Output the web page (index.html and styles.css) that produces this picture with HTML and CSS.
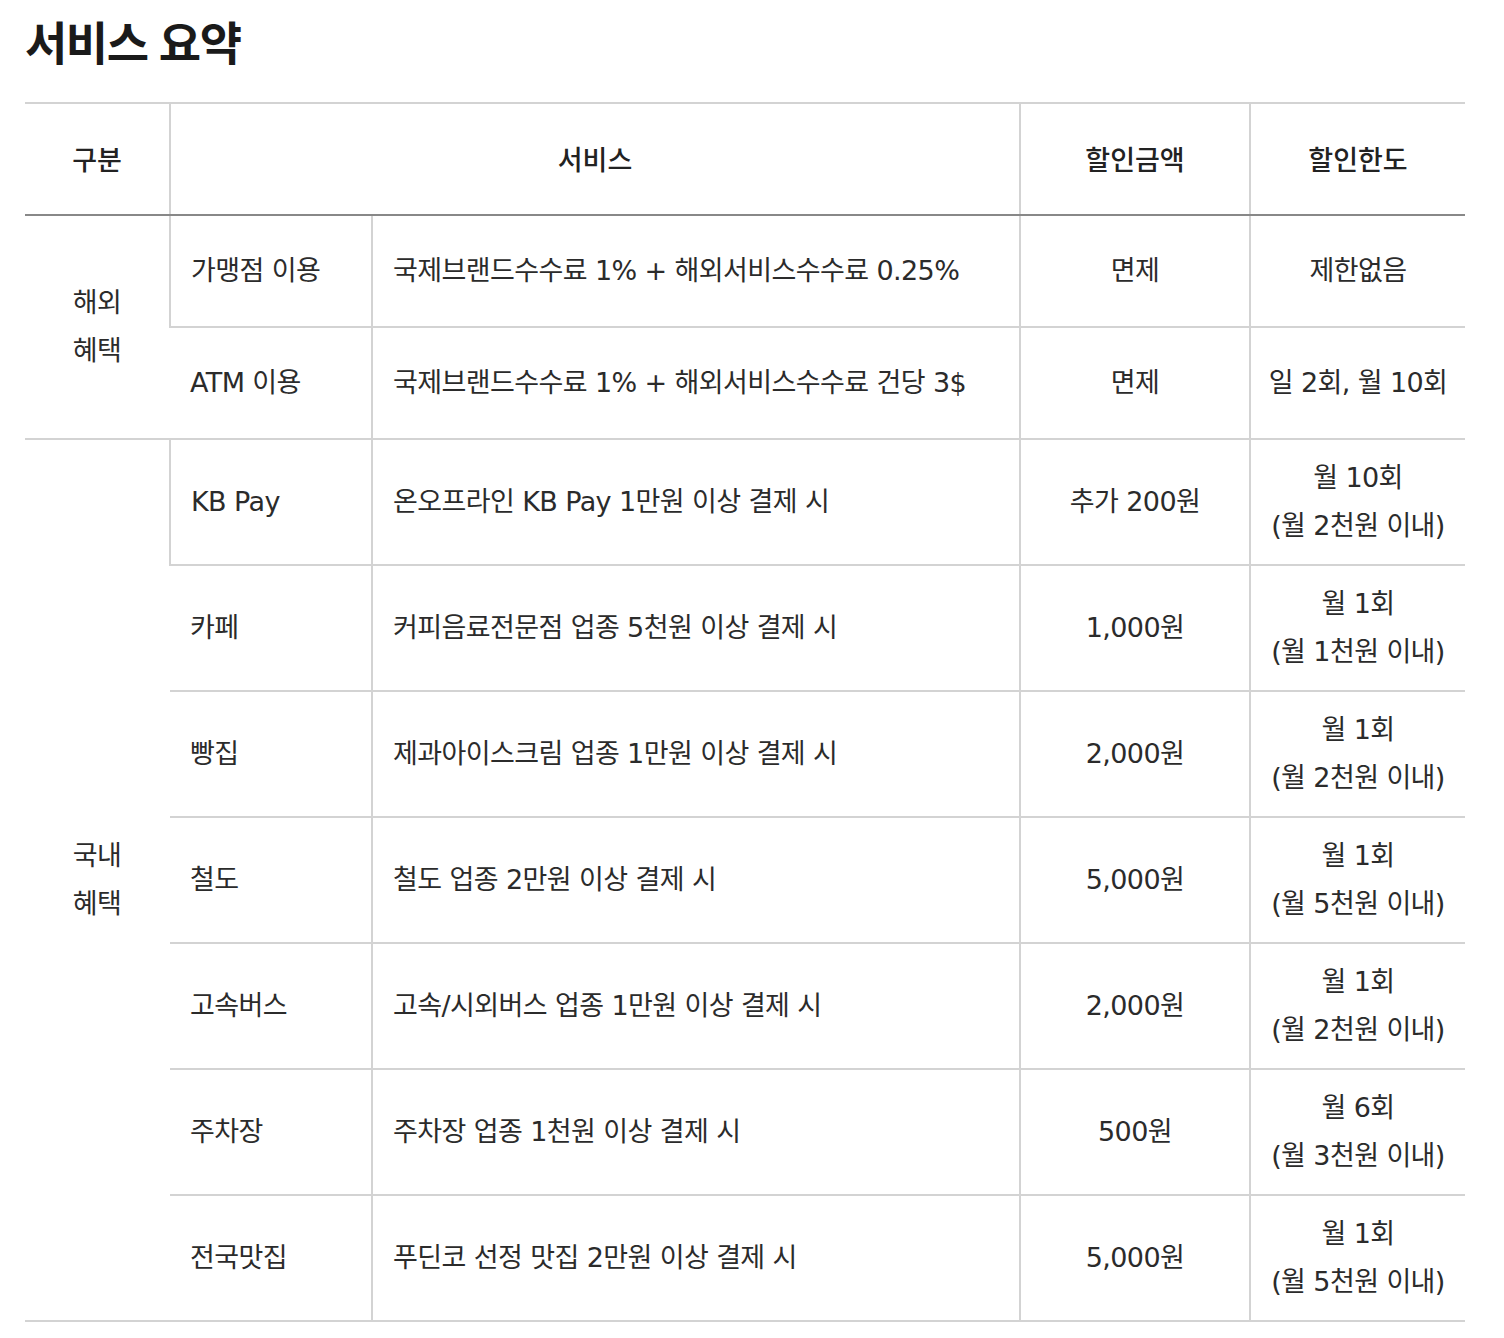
FILE: index.html
```html
<!DOCTYPE html>
<html lang="ko">
<head>
<meta charset="utf-8">
<title>서비스 요약</title>
<link rel="stylesheet" href="styles.css">
</head>
<body>
<div class="page">
  <h2 class="title">서비스 요약</h2>
  <table class="summary">
    <colgroup>
      <col class="c1"><col class="c2"><col class="c3"><col class="c4"><col class="c5">
    </colgroup>
    <thead>
      <tr>
        <th>구분</th>
        <th colspan="2">서비스</th>
        <th>할인금액</th>
        <th>할인한도</th>
      </tr>
    </thead>
    <tbody>
      <tr class="short">
        <td rowspan="2" class="group">해외<br>혜택</td>
        <td class="left">가맹점 이용</td>
        <td class="left">국제브랜드수수료 1% + 해외서비스수수료 0.25%</td>
        <td>면제</td>
        <td>제한없음</td>
      </tr>
      <tr class="short">
        <td class="left">ATM 이용</td>
        <td class="left">국제브랜드수수료 1% + 해외서비스수수료 건당 3$</td>
        <td>면제</td>
        <td>일 2회, 월 10회</td>
      </tr>
      <tr class="tall">
        <td rowspan="7" class="group">국내<br>혜택</td>
        <td class="left">KB Pay</td>
        <td class="left">온오프라인 KB Pay 1만원 이상 결제 시</td>
        <td>추가 200원</td>
        <td>월 10회<br>(월 2천원 이내)</td>
      </tr>
      <tr class="tall">
        <td class="left">카페</td>
        <td class="left">커피음료전문점 업종 5천원 이상 결제 시</td>
        <td>1,000원</td>
        <td>월 1회<br>(월 1천원 이내)</td>
      </tr>
      <tr class="tall">
        <td class="left">빵집</td>
        <td class="left">제과아이스크림 업종 1만원 이상 결제 시</td>
        <td>2,000원</td>
        <td>월 1회<br>(월 2천원 이내)</td>
      </tr>
      <tr class="tall">
        <td class="left">철도</td>
        <td class="left">철도 업종 2만원 이상 결제 시</td>
        <td>5,000원</td>
        <td>월 1회<br>(월 5천원 이내)</td>
      </tr>
      <tr class="tall">
        <td class="left">고속버스</td>
        <td class="left">고속/시외버스 업종 1만원 이상 결제 시</td>
        <td>2,000원</td>
        <td>월 1회<br>(월 2천원 이내)</td>
      </tr>
      <tr class="tall">
        <td class="left">주차장</td>
        <td class="left">주차장 업종 1천원 이상 결제 시</td>
        <td>500원</td>
        <td>월 6회<br>(월 3천원 이내)</td>
      </tr>
      <tr class="tall">
        <td class="left">전국맛집</td>
        <td class="left">푸딘코 선정 맛집 2만원 이상 결제 시</td>
        <td>5,000원</td>
        <td>월 1회<br>(월 5천원 이내)</td>
      </tr>
    </tbody>
  </table>
</div>
</body>
</html>
```

FILE: styles.css
```css
html, body {
  margin: 0;
  padding: 0;
  background: #fff;
}

body {
  font-family: "DejaVu Sans", "Noto Sans CJK KR", sans-serif;
  color: #222;
}

.page {
  width: 1440px;
  margin-left: 25px;
}

.title {
  margin: 0;
  padding-top: 12px;
  height: 102px;
  box-sizing: border-box;
  font-family: "Noto Sans CJK KR", sans-serif;
  font-size: 46px;
  line-height: 56px;
  font-weight: 700;
  letter-spacing: -1.5px;
  color: #1a1a1a;
}

.summary {
  width: 1440px;
  border-collapse: collapse;
  table-layout: fixed;
  border-top: 2px solid #d3d3d3;
  border-bottom: 2px solid #d3d3d3;
}

.c1 { width: 145px; }
.c2 { width: 202px; }
.c3 { width: 648px; }
.c4 { width: 230px; }
.c5 { width: 215px; }

.summary th,
.summary td {
  padding: 0;
  text-align: center;
  vertical-align: middle;
  font-size: 27px;
  line-height: 48px;
  letter-spacing: -0.6px;
  border-left: 2px solid #d3d3d3;
  border-top: 2px solid #d3d3d3;
}

.summary th {
  height: 110px;
  font-family: "Noto Sans CJK KR", sans-serif;
  font-weight: 500;
  letter-spacing: 0;
  color: #222;
  border-bottom: 2px solid #888;
}

.summary td {
  font-weight: 400;
  color: #2b2b2b;
}

.summary tr > :first-child {
  border-left: none;
}

.summary td.group {
  border-left: none;
}

.summary td.left {
  text-align: left;
  padding-left: 20px;
}

.summary tr.short td {
  height: 110px;
}

.summary tr.tall td {
  height: 124px;
}
```
